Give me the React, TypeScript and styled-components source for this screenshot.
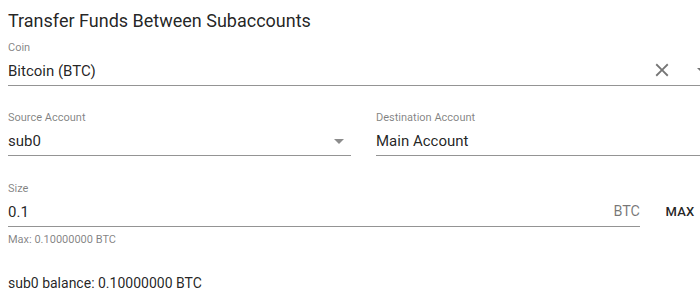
import React from 'react';
import styled, { createGlobalStyle } from 'styled-components';

const GlobalStyle = createGlobalStyle`
   html, body {
      margin: 0;
      background: #fff;
      overflow: hidden;
      font-family: Roboto, "Liberation Sans", Arial, sans-serif;
   }
`;

const CloseIcon = () => (
   <svg width="22" height="22" viewBox="0 0 24 24" fill="currentColor">
      <path d="M19 6.41L17.59 5 12 10.59 6.41 5 5 6.41 10.59 12 5 17.59 6.41 19 12 13.41 17.59 19 19 17.59 13.41 12z" />
   </svg>
);

const ArrowIcon = () => (
   <svg width="24" height="24" viewBox="0 0 24 24" fill="currentColor">
      <path d="M7 10l5 5 5-5z" />
   </svg>
);

const App = () => {
   return (
      <>
         <GlobalStyle />
         <Page>
            <Title>Transfer Funds Between Subaccounts</Title>
            <Field>
               <Label>Coin</Label>
               <InputRow>
                  <Value>Bitcoin (BTC)</Value>
                  <Adornments>
                     <IconBox>
                        <CloseIcon />
                     </IconBox>
                     <IconBox>
                        <ArrowIcon />
                     </IconBox>
                  </Adornments>
               </InputRow>
            </Field>
            <Columns>
               <Field>
                  <Label>Source Account</Label>
                  <InputRow>
                     <Value>sub0</Value>
                     <SelectArrow>
                        <ArrowIcon />
                     </SelectArrow>
                  </InputRow>
               </Field>
               <Field>
                  <Label>Destination Account</Label>
                  <InputRow>
                     <Value>Main Account</Value>
                  </InputRow>
               </Field>
            </Columns>
            <SizeRow>
               <Field $grow>
                  <Label>Size</Label>
                  <InputRow>
                     <Value>0.1</Value>
                     <Unit>BTC</Unit>
                  </InputRow>
               </Field>
               <MaxButton>MAX</MaxButton>
            </SizeRow>
            <Helper>Max: 0.10000000 BTC</Helper>
            <Balance>sub0 balance: 0.10000000 BTC</Balance>
         </Page>
      </>
   );
};

export default App;

const Page = styled.div`
   width: 711px;
   padding: 10px 8px 0;
`;
const Title = styled.h6`
   margin: 0;
   font-size: 18px;
   font-weight: 400;
   line-height: 22px;
   color: rgba(0, 0, 0, 0.87);
`;
const Field = styled.div<{ $grow?: boolean }>`
   display: flex;
   flex-direction: column;
   margin-top: 25px;
   flex: ${(p) => (p.$grow ? 1 : 'initial')};
   &:first-of-type {
      margin-top: 9px;
   }
`;
const Label = styled.label`
   font-size: 11px;
   line-height: 13px;
   color: rgba(0, 0, 0, 0.5);
`;
const InputRow = styled.div`
   position: relative;
   display: flex;
   align-items: flex-end;
   height: 32px;
   box-sizing: border-box;
   padding-bottom: 5px;
   border-bottom: 1px solid rgba(0, 0, 0, 0.42);
`;
const Value = styled.span`
   flex: 1;
   font-size: 15px;
   line-height: 18px;
   color: rgba(0, 0, 0, 0.87);
`;
const Adornments = styled.div`
   display: flex;
   gap: 12px;
   margin-right: 3px;
   margin-bottom: -4px;
   color: rgba(0, 0, 0, 0.54);
`;
const IconBox = styled.span`
   display: flex;
   align-items: center;
   justify-content: center;
   width: 28px;
   height: 28px;
`;
const SelectArrow = styled.span`
   display: flex;
   margin-bottom: -3px;
   color: rgba(0, 0, 0, 0.45);
`;
const Columns = styled.div`
   display: grid;
   grid-template-columns: 343px 343px;
   column-gap: 25px;
   & > ${Field} {
      margin-top: 25px;
   }
`;
const SizeRow = styled.div`
   display: flex;
   align-items: flex-end;
   & > ${Field} {
      margin-top: 26px;
   }
`;
const Unit = styled.span`
   font-size: 14.4px;
   line-height: 18px;
   color: rgba(0, 0, 0, 0.54);
`;
const MaxButton = styled.button`
   width: 64px;
   height: 32px;
   margin: 0 7px 0 8px;
   padding: 0;
   border: none;
   background: none;
   font-family: inherit;
   font-size: 13px;
   font-weight: 500;
   letter-spacing: 0.3px;
   color: rgba(0, 0, 0, 0.87);
`;
const Helper = styled.p`
   margin: 6px 0 0;
   font-size: 11px;
   line-height: 13px;
   color: rgba(0, 0, 0, 0.5);
`;
const Balance = styled.p`
   margin: 29px 0 0;
   font-size: 14px;
   line-height: 16px;
   color: rgba(0, 0, 0, 0.87);
`;
